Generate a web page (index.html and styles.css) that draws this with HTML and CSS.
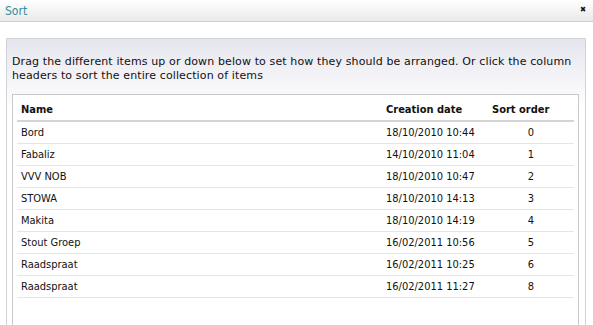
FILE: index.html
```html
<!DOCTYPE html>
<html lang="en">
<head>
  <meta charset="UTF-8">
  <title>Sort</title>
  <link rel="stylesheet" href="styles.css">
</head>
<body>
  <div class="dialog">
    <div class="dialog-head">
      <span class="dialog-title">Sort</span>
      <span class="dialog-close">&#x2716;</span>
    </div>
    <div class="dialog-body">
      <div class="panel">
        <p class="intro">Drag the different items up or down below to set how they should be arranged. Or click the column headers to sort the entire collection of items</p>
        <div class="grid-box">
          <table class="sort-table">
            <thead>
              <tr><th class="col-name">Name</th><th class="col-date">Creation date</th><th class="col-order">Sort order</th></tr>
            </thead>
            <tbody>
              <tr><td>Bord</td><td>18/10/2010 10:44</td><td class="num">0</td></tr>
              <tr><td>Fabaliz</td><td>14/10/2010 11:04</td><td class="num">1</td></tr>
              <tr><td>VVV NOB</td><td>18/10/2010 10:47</td><td class="num">2</td></tr>
              <tr><td>STOWA</td><td>18/10/2010 14:13</td><td class="num">3</td></tr>
              <tr><td>Makita</td><td>18/10/2010 14:19</td><td class="num">4</td></tr>
              <tr><td>Stout Groep</td><td>16/02/2011 10:56</td><td class="num">5</td></tr>
              <tr><td>Raadspraat</td><td>16/02/2011 10:25</td><td class="num">6</td></tr>
              <tr><td>Raadspraat</td><td>16/02/2011 11:27</td><td class="num">8</td></tr>
            </tbody>
          </table>
        </div>
      </div>
    </div>
  </div>
</body>
</html>
```

FILE: styles.css
```css
html, body {
  margin: 0;
  height: 100%;
  overflow: hidden;
}
body {
  font-family: "DejaVu Sans Condensed", "DejaVu Sans", sans-serif;
  font-size: 11px;
  color: #111;
  background: #fff;
}
.dialog {
  display: flex;
  flex-direction: column;
  height: 100%;
}
.dialog-head {
  flex: none;
  height: 21px;
  border-bottom: 1px solid #cfcfcf;
  background: linear-gradient(#ffffff, #e9e9e9);
  display: flex;
  justify-content: space-between;
  align-items: center;
  padding: 0 7px 0 5px;
}
.dialog-title {
  color: #3a8c9c;
  font-size: 12px;
}
.dialog-close {
  font-size: 8px;
  color: #111;
  margin-top: -3px;
}
.dialog-body {
  flex: 1;
  min-height: 0;
  padding: 16px 7px 0 6px;
  display: flex;
}
.panel {
  flex: 1;
  display: flex;
  flex-direction: column;
  border: 1px solid #d2d2da;
  border-bottom: none;
  background: linear-gradient(#e5e5ee, #ffffff 70px);
  padding: 16px 6px 0 5px;
}
.intro {
  margin: 0;
  font-family: "DejaVu Sans", sans-serif;
  letter-spacing: 0.12px;
  line-height: 14px;
}
.grid-box {
  flex: 1;
  margin-top: 11px;
  background: #fff;
  border: 1px solid #c8c8c8;
  border-bottom: none;
  padding: 0 4px;
}
.sort-table {
  width: 557px;
  border-collapse: collapse;
}
.sort-table th {
  text-align: left;
  font-weight: bold;
  height: 22px;
  padding: 3px 4px 0;
  border-bottom: 2px solid #d4d4d4;
}
.sort-table td {
  height: 21px;
  padding: 0 4px;
  border-bottom: 1px solid #e6e6e6;
}
.col-name { width: 357px; }
.col-date { width: 98px; }
.col-order { width: 78px; }
.sort-table td.num {
  text-align: center;
}
```
